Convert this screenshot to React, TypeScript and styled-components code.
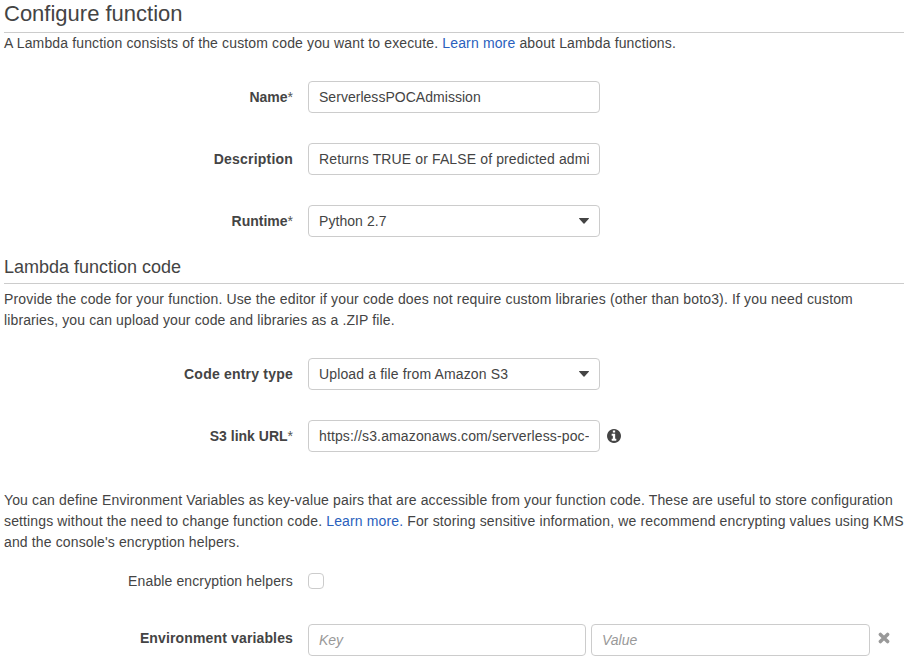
import React from "react";
import styled, { createGlobalStyle, css } from "styled-components";

const GlobalStyle = createGlobalStyle`
  body { margin: 0; background: #fff; overflow: hidden; }
  * { box-sizing: border-box; }
`;

const Page = styled.main`
  width: 908px;
  height: 662px;
  padding: 0 4px;
  overflow: hidden;
  color: #444;
  font: 14px/21px "Liberation Sans", Arial, sans-serif;
`;

const Title = styled.h1`
  margin: 0;
  height: 33px;
  padding-top: 1px;
  border-bottom: 1px solid #ccc;
  font-size: 22px;
  line-height: 26px;
  font-weight: 400;
`;

const Subtitle = styled.h2`
  margin: 19px 0 0;
  height: 28px;
  border-bottom: 1px solid #ccc;
  font-size: 18px;
  line-height: 22px;
  font-weight: 400;
`;

const Text = styled.p<{ $top?: number }>`
  margin: ${(p) => p.$top ?? 0}px 0 0;
  white-space: nowrap;
`;

const Line = styled.span<{ $spacing?: number }>`
  display: block;
  letter-spacing: ${(p) => p.$spacing ?? 0.137}px;
`;

const Link = styled.a`
  color: #2a5fbd;
  text-decoration: none;
`;

const Row = styled.div<{ $top: number; $height?: number }>`
  display: flex;
  align-items: center;
  height: ${(p) => p.$height ?? 32}px;
  margin-top: ${(p) => p.$top}px;
`;

const Label = styled.label<{ $plain?: boolean; $raise?: number; $spacing?: number }>`
  width: 289px;
  margin-right: 15px;
  margin-bottom: ${(p) => p.$raise ?? 0}px;
  text-align: right;
  font-weight: ${(p) => (p.$plain ? 400 : 700)};
  letter-spacing: ${(p) => p.$spacing ?? 0}px;
`;

const Star = styled.span`
  font-weight: 400;
  color: #555;
`;

const field = css<{ $spacing?: number }>`
  height: 32px;
  border: 1px solid #ccc;
  border-radius: 4px;
  background: #fff;
  color: #444;
  font: inherit;
  letter-spacing: ${(p) => p.$spacing ?? 0}px;
`;

const Input = styled.input<{ $width?: number; $spacing?: number }>`
  ${field}
  width: ${(p) => p.$width ?? 292}px;
  padding: 0 10px;
  outline: none;
  & + & { margin-left: 5px; }
  &::placeholder { color: #999; font-style: italic; opacity: 1; }
`;

const Select = styled.div<{ $spacing?: number }>`
  ${field}
  display: flex;
  align-items: center;
  justify-content: space-between;
  width: 292px;
  padding: 0 10px;
`;

const Checkbox = styled.input`
  appearance: none;
  width: 16px;
  height: 16px;
  margin: 0;
  border: 1px solid #ccc;
  border-radius: 4px;
`;

const Icon = styled.svg<{ $left?: number; $raise?: number }>`
  display: block;
  flex: none;
  margin-left: ${(p) => p.$left ?? 0}px;
  margin-bottom: ${(p) => p.$raise ?? 0}px;
`;

const Caret = () => (
  <Icon width="10" height="6" viewBox="0 0 10 6">
    <path d="M.6 0h8.800q1 0 .4.8L5.500 5.600q-.5.500-1 0L.2.8Q-.4 0 .6 0z" fill="#444" />
  </Icon>
);

const Info = () => (
  <Icon $left={7} width="14" height="14" viewBox="0 0 1536 1536">
    <path fill="#444" d="M1024 1248v-160q0-14-9-23t-23-9h-96V544q0-14-9-23t-23-9H544q-14 0-23 9t-9 23v160q0 14 9 23t23 9h96v320h-96q-14 0-23 9t-9 23v160q0 14 9 23t23 9h448q14 0 23-9t9-23zM896 352V192q0-14-9-23t-23-9H672q-14 0-23 9t-9 23v160q0 14 9 23t23 9h192q14 0 23-9t9-23zm640 416q0 209-103 385.500T1153.500 1433 768 1536t-385.500-103T103 1153.500 0 768t103-385.500T382.500 103 768 0t385.500 103T1433 382.500 1536 768z" />
  </Icon>
);

const Remove = () => (
  <Icon $left={8} $raise={5} width="12" height="12" viewBox="0 0 12 12">
    <path d="M2.4 2.4l7.2 7.2M9.600 2.400l-7.200 7.200" stroke="#999" strokeWidth="3.500" strokeLinecap="round" />
  </Icon>
);

export default function App() {
  return (
    <>
      <GlobalStyle />
      <Page>
        <Title>Configure function</Title>
        <Text>
          <Line $spacing={0.142}>A Lambda function consists of the custom code you want to execute. <Link>Learn more</Link> about Lambda functions.</Line>
        </Text>
        <Row $top={27}>
          <Label>Name<Star>*</Star></Label>
          <Input defaultValue="ServerlessPOCAdmission" $spacing={0.03} />
        </Row>
        <Row $top={30}>
          <Label $spacing={0.2}>Description</Label>
          <Input defaultValue="Returns TRUE or FALSE of predicted admission" $spacing={0.125} />
        </Row>
        <Row $top={30}>
          <Label>Runtime<Star>*</Star></Label>
          <Select $spacing={0.06}>Python 2.7<Caret /></Select>
        </Row>
        <Subtitle>Lambda function code</Subtitle>
        <Text $top={5}>
          <Line $spacing={0.148}>Provide the code for your function. Use the editor if your code does not require custom libraries (other than boto3). If you need custom</Line>
          <Line $spacing={0.125}>libraries, you can upload your code and libraries as a .ZIP file.</Line>
        </Text>
        <Row $top={27}>
          <Label $spacing={0.21}>Code entry type</Label>
          <Select $spacing={0.14}>Upload a file from Amazon S3<Caret /></Select>
        </Row>
        <Row $top={30}>
          <Label>S3 link URL<Star>*</Star></Label>
          <Input defaultValue="https://s3.amazonaws.com/serverless-poc-" $spacing={0.13} />
          <Info />
        </Row>
        <Text $top={38}>
          <Line>You can define Environment Variables as key-value pairs that are accessible from your function code. These are useful to store configuration</Line>
          <Line>settings without the need to change function code. <Link>Learn more.</Link> For storing sensitive information, we recommend encrypting values using KMS</Line>
          <Line>and the console's encryption helpers.</Line>
        </Text>
        <Row $top={18} $height={20}>
          <Label $plain $spacing={0.12}>Enable encryption helpers</Label>
          <Checkbox type="checkbox" />
        </Row>
        <Row $top={33}>
          <Label $raise={4} $spacing={0.14}>Environment variables</Label>
          <Input $width={278} placeholder="Key" />
          <Input $width={279} placeholder="Value" />
          <Remove />
        </Row>
      </Page>
    </>
  );
}
